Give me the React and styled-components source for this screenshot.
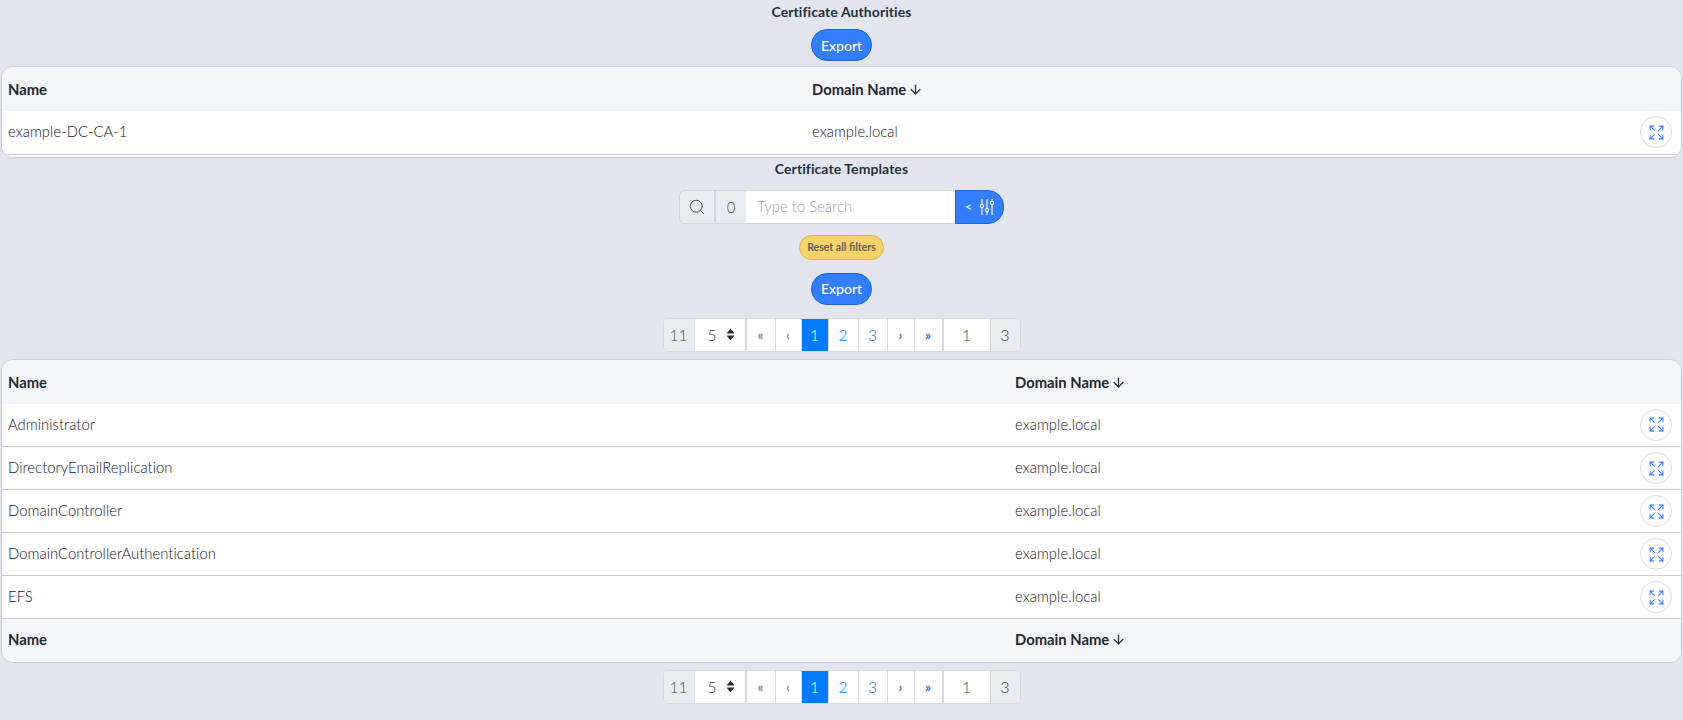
import React from "react";
import styled, { createGlobalStyle } from "styled-components";
import { Search, Expand, ArrowDown } from "lucide-react";

const Global = createGlobalStyle`
  html, body { margin: 0; padding: 0; background: #e2e5ed; }
  body { font-family: "Lato", "Liberation Sans", sans-serif; color: #212529; font-size: 14px; }
  * { box-sizing: border-box; }
`;

const Page = styled.div`
  display: flex;
  flex-direction: column;
  align-items: center;
  padding: 0 1px;
  height: 720px;
  overflow: hidden;
`;

const Title = styled.h5`
  margin: ${(p) => p.$top}px 0 0;
  font-size: 14px;
  line-height: 22px;
  font-weight: 700;
  letter-spacing: 0.08px;
  color: #1f3240;
`;

const ExportButton = styled.button`
  margin-top: ${(p) => p.$top}px;
  height: 32px;
  width: 61px;
  padding: 0;
  border: 1px solid #1a66d9;
  border-radius: 16px;
  background: #337dff;
  color: #fff;
  font: 500 14px "Lato", sans-serif;
`;

const TableCard = styled.div`
  width: 100%;
  margin-top: ${(p) => p.$top}px;
  border: 1px solid #c9ccd6;
  border-radius: 12px;
  overflow: hidden;
  background: #f3f5f9;
`;

const Table = styled.table`
  width: 100%;
  border-collapse: collapse;
  table-layout: fixed;
`;

const HeadCell = styled.th`
  height: ${(p) => p.$h}px;
  padding: 0 6px ${(p) => (p.$h === 43 ? 2 : 0)}px;
  text-align: left;
  font-size: 14.8px;
  font-weight: 700;
  color: #25282e;
  background: #f3f5f9;
  ${(p) => p.$w && `width: ${p.$w}px;`}
`;

const SortArrow = styled(ArrowDown)`
  width: 15px;
  height: 15px;
  margin-left: 2px;
  vertical-align: -2px;
`;

const Row = styled.tr`
  height: 43px;
  background: #fff;
  border-bottom: 1px solid #c9ccd6;
`;

const Cell = styled.td`
  padding: 0 6px 2px;
  font-size: 14.8px;
  font-weight: 300;
  letter-spacing: 0.05px;
  color: #14171c;
`;

const ActionCell = styled.td`
  padding: 0 9px 0 0;
  text-align: right;
`;

const RoundButton = styled.span`
  display: inline-flex;
  align-items: center;
  justify-content: center;
  width: 32px;
  height: 32px;
  border: 1px solid #d8dee4;
  border-radius: 50%;
  color: #337dff;
  vertical-align: middle;
`;

const Spacer = styled.div`
  height: 2px;
  background: #fff;
`;

const SearchBar = styled.div`
  margin-top: ${(p) => p.$top}px;
  display: flex;
  height: 34px;
  width: 325px;
`;

const Addon = styled.div`
  display: flex;
  align-items: center;
  justify-content: center;
  width: ${(p) => p.$w}px;
  background: #e9ecef;
  border: 1px solid #ced4da;
  border-right: none;
  color: #4a4f57;
  font-size: 15px;
  font-weight: 300;
  ${(p) => p.$first && "border-radius: 6px 0 0 6px; border-right: 1px solid #ced4da;"}
`;

const SearchInput = styled.div`
  flex: 1;
  background: #fff;
  border-top: 1px solid #ced4da;
  border-bottom: 1px solid #ced4da;
  color: #a0a3a9;
  font-size: 14.9px;
  font-weight: 300;
  line-height: 30px;
  padding-left: 11px;
`;

const FilterToggle = styled.div`
  display: flex;
  align-items: center;
  justify-content: center;
  gap: 7px;
  width: 49px;
  padding-left: 1px;
  background: #337dff;
  border: 1px solid #1a66d9;
  border-radius: 0 16px 16px 0;
  color: #fff;
  font-size: 12px;
`;

const SliderIcon = styled.svg`
  width: 16px;
  height: 18px;
  fill: none;
  stroke: #fff;
  stroke-width: 1.2;
`;

const ResetButton = styled.button`
  margin-top: 11px;
  height: 25px;
  width: 85px;
  padding: 0;
  border: 1px solid #dcb24a;
  border-radius: 13px;
  background: #f5d369;
  color: #5f5f5f;
  font: 700 10.5px "Lato", sans-serif;
`;

const Pager = styled.div`
  margin-top: ${(p) => p.$top}px;
  display: flex;
  height: 34px;
  width: 358px;
  border: 1px solid #d5d9df;
  border-radius: 5px;
  overflow: hidden;
  background: #fff;
`;

const PagerPart = styled.div`
  display: flex;
  align-items: center;
  justify-content: center;
  flex: 0 0 ${(p) => p.$w}px;
  border-right: 1px solid #d8dce2;
  background: ${(p) => (p.$active ? "#007bff" : p.$muted ? "#e9ecef" : "#fff")};
  color: ${(p) => (p.$active ? "#fff" : p.$link ? "#0a6cf0" : "#3e434a")};
  font-size: ${(p) => (p.$small ? 13 : 15.5)}px;
  font-weight: ${(p) => (p.$small ? 700 : 300)};
  ${(p) => p.$small && !p.$link && "color: #7b8087;"}
  ${(p) => p.$thick && "border-right-width: 2px;"}
  ${(p) => p.$last && "border-right: none;"}
`;

const PageSize = styled(PagerPart)`
  justify-content: space-between;
  padding: 0 10px 0 13px;
`;

const Caret = styled.svg`
  width: 9px;
  height: 13px;
  fill: #2a2d33;
`;

function Pagination({ top }) {
  return (
    <Pager $top={top}>
      <PagerPart $w={31} $muted>11</PagerPart>
      <PageSize $w={52} $thick>
        5
        <Caret viewBox="0 0 9 13"><path d="M4.5 0.5 L8.5 5.5 H0.5 Z M4.5 12.5 L8.5 7.5 H0.5 Z" /></Caret>
      </PageSize>
      <PagerPart $w={29} $small>«</PagerPart>
      <PagerPart $w={26} $small>‹</PagerPart>
      <PagerPart $w={27} $active>1</PagerPart>
      <PagerPart $w={30} $link>2</PagerPart>
      <PagerPart $w={29} $link>3</PagerPart>
      <PagerPart $w={27} $link $small>›</PagerPart>
      <PagerPart $w={29} $link $small $thick>»</PagerPart>
      <PagerPart $w={47}>1</PagerPart>
      <PagerPart $w={29} $muted $last>3</PagerPart>
    </Pager>
  );
}

function Head({ nameWidth, h }) {
  return (
    <tr>
      <HeadCell $w={nameWidth} $h={h}>Name</HeadCell>
      <HeadCell $h={h}>Domain Name<SortArrow strokeWidth={2} /></HeadCell>
      <HeadCell $w={60} $h={h} />
    </tr>
  );
}

function DataRow({ name }) {
  return (
    <Row>
      <Cell>{name}</Cell>
      <Cell>example.local</Cell>
      <ActionCell>
        <RoundButton><Expand size={17} strokeWidth={1.5} /></RoundButton>
      </ActionCell>
    </Row>
  );
}

const templates = [
  "Administrator",
  "DirectoryEmailReplication",
  "DomainController",
  "DomainControllerAuthentication",
  "EFS",
];

export default function App() {
  return (
    <Page>
      <Global />
      <Title $top={1}>Certificate Authorities</Title>
      <ExportButton $top={6}>Export</ExportButton>
      <TableCard $top={5}>
        <Table>
          <thead><Head nameWidth={804} h={44} /></thead>
          <tbody><DataRow name="example-DC-CA-1" /></tbody>
        </Table>
        <Spacer />
      </TableCard>
      <Title $top={0}>Certificate Templates</Title>
      <SearchBar $top={10}>
        <Addon $w={36} $first><Search size={18} strokeWidth={1.3} /></Addon>
        <Addon $w={31}>0</Addon>
        <SearchInput>Type to Search</SearchInput>
        <FilterToggle>
          &lt;
          <SliderIcon viewBox="0 0 16 18">
            <path d="M3 1v16M8 1v16M13 1v16" />
            <circle cx="3" cy="8" r="1.6" fill="#337dff" />
            <circle cx="8" cy="12" r="1.6" fill="#337dff" />
            <circle cx="13" cy="5" r="1.6" fill="#337dff" />
          </SliderIcon>
        </FilterToggle>
      </SearchBar>
      <ResetButton>Reset all filters</ResetButton>
      <ExportButton $top={13}>Export</ExportButton>
      <Pagination top={13} />
      <TableCard $top={7}>
        <Table>
          <thead><Head nameWidth={1007} h={44} /></thead>
          <tbody>{templates.map((t) => <DataRow key={t} name={t} />)}</tbody>
          <tfoot><Head nameWidth={1007} h={43} /></tfoot>
        </Table>
      </TableCard>
      <Pagination top={7} />
    </Page>
  );
}
